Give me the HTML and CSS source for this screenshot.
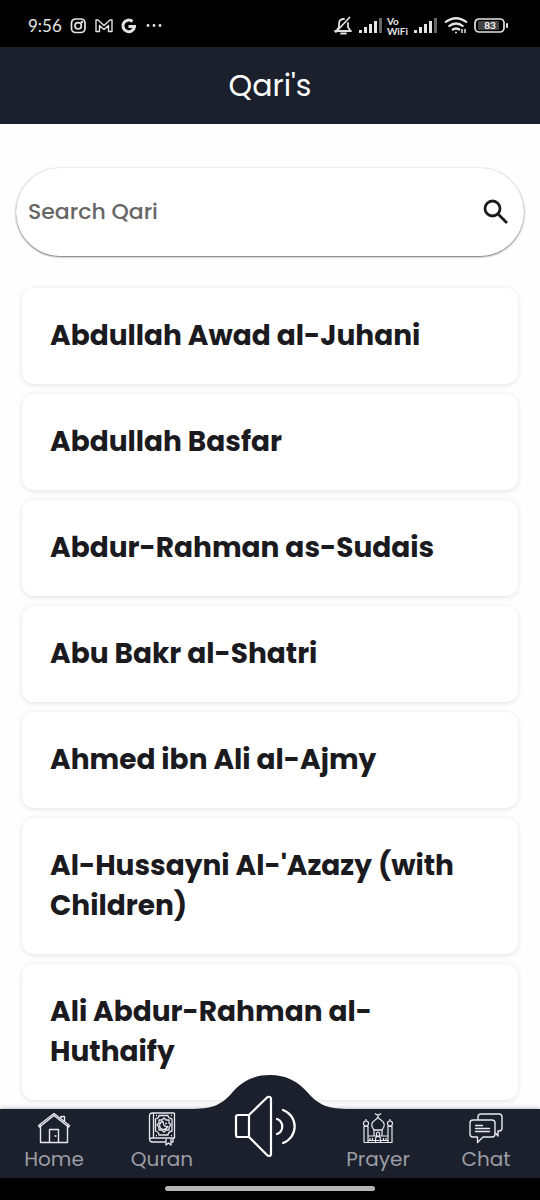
FILE: index.html
```html
<!DOCTYPE html>
<html lang="en">
<head>
<meta charset="utf-8">
<meta name="viewport" content="width=device-width, initial-scale=1">
<title>Qari's</title>
<link rel="stylesheet" href="styles.css">
</head>
<body>
<div class="status">
  <div class="status-group">
    <span class="clock">9:56</span>
    <svg class="app-icons" width="92" height="18" viewBox="0 0 92 18" fill="none" stroke="#e4e4e4" stroke-width="1.7">
      <rect x="1.5" y="2" width="13.5" height="13.5" rx="4"/><circle cx="8.2" cy="8.8" r="3.2"/><circle cx="12" cy="5" r=".5"/>
      <path d="M26 14.500V3h2l6 5.500L40 3h2v11.500h-3.500V8.500L34 12.500l-4.500-4v6z" stroke-width="1.4" stroke-linejoin="round"/>
      <path d="M62.500 4.500A5.800 5.800 0 1 0 64.500 9.500H58.500" stroke-width="3"/>
      <g fill="#e4e4e4" stroke="none"><circle cx="78" cy="8.500" r="1.4"/><circle cx="84" cy="8.500" r="1.4"/><circle cx="90" cy="8.500" r="1.4"/></g>
    </svg>
  </div>
  <div class="status-group status-right">
    <svg width="48" height="20" viewBox="0 0 48 20" fill="none" stroke="#dedede" stroke-width="1.8">
      <path d="M1 15h16M3 14l2-3V8c0-3 2-5 5-5M14 7v4l2.500 4M7 17.500h5M15.500 1.500L2 16" stroke-linecap="round"/>
      <g stroke="none" fill="#e4e4e4"><rect x="25" y="14" width="3" height="3"/><rect x="30" y="11" width="3" height="6"/><rect x="35" y="8" width="3" height="9"/><rect x="40" y="5" width="3" height="12"/><rect x="45" y="2" width="3" height="15" fill="#666"/></g>
    </svg>
    <span class="vowifi"><span>Vo</span><span>WiFi</span></span>
    <svg width="96" height="20" viewBox="0 0 96 20" fill="none" stroke="#e4e4e4" stroke-width="2.200">
      <g stroke="none" fill="#e4e4e4"><rect x="1" y="14" width="3" height="3"/><rect x="6" y="11" width="3" height="6"/><rect x="11" y="8" width="3" height="9"/><rect x="16" y="5" width="3" height="12"/><rect x="21" y="2" width="3" height="15" fill="#666"/></g>
      <path d="M32 6.500Q43-2 54 6.500M35.500 10.500Q43 4.500 50.500 10.500M39 14Q43 11 47 14"/><circle cx="43" cy="16.500" r="1" fill="#e4e4e4" stroke="none"/><path d="M49 17v-4M52 13v4" stroke-width="1.500"/>
      <rect x="62" y="3" width="29" height="13" rx="4" stroke-width="1.700"/><rect x="65" y="5" width="21" height="9" rx="1" fill="#444" stroke="none"/><rect x="93" y="7" width="2" height="5" rx="1" fill="#e4e4e4" stroke="none"/>
      <text x="77" y="13" class="battery">83</text>
    </svg>
  </div>
</div>
<header class="header"><h1 class="title">Qari's</h1></header>
<main class="main">
  <form class="search">
    <input class="search-input" type="search" placeholder="Search Qari" aria-label="Search Qari">
    <button class="search-button" type="button" aria-label="Search">
      <svg width="26" height="26" viewBox="0 0 26 26" fill="none" stroke="#1b1b1e" stroke-width="2.800"><circle cx="9.500" cy="9.500" r="7.500"/><path d="M15 15l9 9"/></svg>
    </button>
  </form>
  <ul class="list">
    <li><a class="card" href="#">Abdullah Awad al-Juhani</a></li>
    <li><a class="card" href="#">Abdullah Basfar</a></li>
    <li><a class="card" href="#">Abdur-Rahman as-Sudais</a></li>
    <li><a class="card" href="#">Abu Bakr al-Shatri</a></li>
    <li><a class="card" href="#">Ahmed ibn Ali al-Ajmy</a></li>
    <li><a class="card" href="#">Al-Hussayni Al-'Azazy (with Children)</a></li>
    <li><a class="card" href="#">Ali Abdur-Rahman al-Huthaify</a></li>
  </ul>
</main>
<footer class="footer">
  <nav class="nav">
    <a class="tab tab-audio" href="#" aria-label="Audio">
      <svg class="bump" width="160" height="104" viewBox="0 0 160 104" fill="none" stroke="#fff" stroke-width="2.200">
        <path d="M0 35C22 35 31 31 41 20C52 7 64 1 80 1S108 7 119 20C129 31 138 35 160 35V103H0z" fill="#1b202c" stroke="none"/>
        <path d="M59 41H48q-2 0-2 2v18q0 2 2 2h11M59 40v24M59 41L77 23.500q1-1 3-.5 1 .5 1 2v55q0 2-2 2-1 0-2-1L59 63" stroke-linejoin="round"/>
        <path d="M87 45a8 8 0 0 1 0 15M93 36a17.500 17.500 0 0 1 0 33" stroke-linecap="round"/>
      </svg>
    </a>
    <a class="tab tab-home" href="#">
      <svg width="34" height="34" viewBox="0 0 34 34" fill="none" stroke="#e6e8ec" stroke-width="1.400" stroke-linejoin="round">
        <path d="M3.500 13v17.500h27V13M1.500 13.500L17 1.500l15.500 12-1 1.500L17 3.500 2.500 15zM24 6V4.500h3.500V9M12.500 30.500v-13h9v13"/><circle cx="18.500" cy="24" r=".4"/>
      </svg>
      <span>Home</span>
    </a>
    <a class="tab" href="#">
      <svg width="34" height="34" viewBox="0 0 34 34" fill="none" stroke="#e6e8ec" stroke-width="1.300" stroke-linejoin="round">
        <path d="M29.500 1H7.500Q4.500 1 4.500 4v23q0 3 3 3H21M29.500 1v25H7.500q-3 0-3 2M8.500 1v25M28 26v4h-2M21 27v6l2.500-2 2.500 2v-6"/>
        <path d="M14 3.500h9q0 2.500 4 3.500v12q-4 1-4 4h-9q0-3-3.500-4V7q3.500-1 3.500-3.500zM11 3.500h1M26 3.500h1M11 23.500h1M26 23.500h1"/>
        <path d="M19 6l2 2h3v3l2 2-2 2v3h-3l-2 2-2-2h-3v-3l-2-2 2-2V8h3z"/><path d="M18 9.500a4 4 0 1 0 4.500 5q-4 1-4.500-5z"/><circle cx="21" cy="11.500" r=".4"/>
      </svg>
      <span>Quran</span>
    </a>
    <a class="tab tab-prayer" href="#">
      <svg width="34" height="34" viewBox="0 0 34 34" fill="none" stroke="#e6e8ec" stroke-width="1.200" stroke-linejoin="round">
        <path d="M3 30.500h28v-16h-4v16M3 30.500v-16h4v16M7 24h20M2.500 14.500h5M26.500 14.500h5M7 28.500h20M13 24v-6h8v6M14.500 30v-3a2.500 2.500 0 0 1 5 0v3M9 28v-2M11.500 28v-2M22.500 28v-2M25 28v-2"/>
        <circle cx="5" cy="11.500" r="2.500"/><circle cx="29" cy="11.500" r="2.500"/><path d="M5 9V7M29 9V7M13 18q-5-6 1-10 2-1 3-3 1 2 3 3 6 4 1 10zM17 5V3M14 1.500q3 3 6 0"/><path d="M15.500 24v-3q1.500-2 3 0v3"/>
      </svg>
      <span>Prayer</span>
    </a>
    <a class="tab" href="#">
      <svg width="34" height="34" viewBox="0 0 34 34" fill="none" stroke="#e6e8ec" stroke-width="1.400" stroke-linejoin="round" stroke-linecap="round">
        <path d="M4 8h19q3 0 3 3v11q0 3-3 3H14l-5.500 5.500V25H4q-3 0-3-3V11q0-3 3-3zM6.500 13.500h7M6.500 16.500h14M6.500 19.500h14"/>
        <path d="M9 7.500V5q0-3 3-3h18q3 0 3 3v11q0 3-3 3h-1v5l-2.500-3"/>
      </svg>
      <span>Chat</span>
    </a>
  </nav>
  <div class="gesture"><span class="gesture-bar"></span></div>
</footer>
</body>
</html>
```
FILE: styles.css
```css
* { box-sizing: border-box; }
body {
  margin: 0;
  min-height: 100vh;
  display: flex;
  flex-direction: column;
  background: #fefefe;
  color: #1b1b1f;
  font-family: Poppins, Inter, "Liberation Sans", sans-serif;
}
a { color: inherit; text-decoration: none; }
svg { display: block; }
.status {
  height: 47px;
  padding: 4px 31px 0 28px;
  display: flex;
  align-items: center;
  justify-content: space-between;
  background: #000;
  color: #e4e4e4;
}
.status-group { display: flex; align-items: center; gap: 8px; }
.status-right { gap: 5px; }
.clock { font: 17px/20px Lato, sans-serif; }
.vowifi { display: flex; flex-direction: column; font: 700 10px/10px Lato, sans-serif; }
.battery { font: 700 10px Lato, sans-serif; fill: #fff; stroke: none; text-anchor: middle; }
.header {
  height: 77px;
  display: flex;
  align-items: center;
  justify-content: center;
  background: #1b202c;
  color: #fff;
}
.title { margin: 0; font-size: 30px; line-height: 40px; font-weight: 400; }
.main { flex: 1; padding: 44px 16px 8px; }
.search {
  height: 88px;
  padding: 0 15px 0 12px;
  display: flex;
  align-items: center;
  border-radius: 44px;
  background: #fff;
  box-shadow: 0 1px 2px rgba(0, 0, 0, .55), 0 0 2px rgba(0, 0, 0, .15);
}
.search-input {
  flex: 1;
  min-width: 0;
  padding: 0;
  border: 0;
  outline: 0;
  background: none;
  color: #1b1b1f;
  font: 500 22px/32px Poppins, Inter, sans-serif;
}
.search-input::placeholder { color: #666; opacity: 1; }
.search-button { padding: 0; border: 0; background: none; }
.list {
  margin: 32px 6px 0;
  padding: 0;
  display: flex;
  flex-direction: column;
  gap: 10px;
  list-style: none;
}
.card {
  display: block;
  padding: 28px;
  border-radius: 12px;
  background: #fff;
  box-shadow: 0 1px 5px rgba(0, 0, 0, .12);
  font-size: 28px;
  line-height: 40px;
  font-weight: 700;
}
.footer { position: sticky; bottom: 0; }
.nav {
  height: 69px;
  display: grid;
  grid-template-columns: repeat(5, 1fr);
  background: #1b202c;
  color: #9b9da5;
  box-shadow: 0 -1px 4px rgba(0, 0, 0, .25);
}
.tab {
  grid-row: 1;
  position: relative;
  padding-top: 3px;
  display: flex;
  flex-direction: column;
  align-items: center;
  font-size: 20px;
  line-height: 26px;
}
.tab-home { grid-column: 1; }
.tab-audio { grid-column: 3; }
.tab-prayer { grid-column: 4; }
.bump { position: absolute; bottom: 0; }
.gesture {
  height: 22px;
  padding-bottom: 2px;
  display: flex;
  align-items: center;
  justify-content: center;
  background: #000;
}
.gesture-bar { width: 39%; height: 5px; border-radius: 3px; background: #b4b4b4; }
```
